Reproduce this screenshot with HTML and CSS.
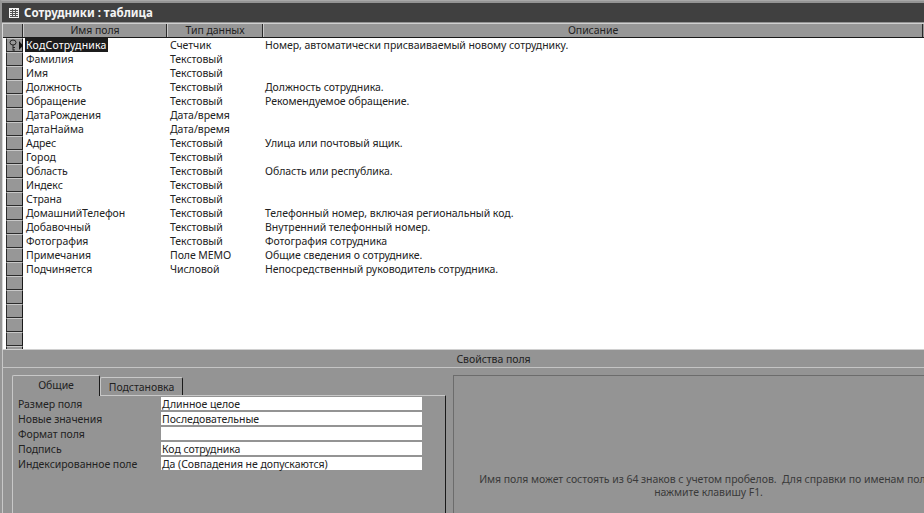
FILE: index.html
```html
<!DOCTYPE html>
<html lang="ru">
<head>
    <meta charset="UTF-8">
    <link rel="stylesheet" href="styles.css">
    <title>Сотрудники : таблица</title>
</head>
<body>
    <div class="window">
        <div class="titlebar">
            <svg class="title-icon" width="10" height="10" viewBox="0 0 10 10">
                <rect width="10" height="10" fill="#f4f4f4"/>
                <path d="M1 2.5H9M1 4.5H9M1 6.5H9M1 8.5H9M3.5 1V9M6.5 1V9" stroke="#555" fill="none"/>
            </svg>
            <span>Сотрудники : таблица</span>
        </div>

        <div class="design-grid">
            <div class="grid-head">
                <div class="sel-head"></div>
                <div class="col-name head-cell">Имя поля</div>
                <div class="col-type head-cell">Тип данных</div>
                <div class="col-desc head-cell">Описание</div>
            </div>
            <div class="grid-body">
                <div class="row"><div class="sel">
                    <svg width="16" height="13" viewBox="0 0 16 13">
                        <ellipse cx="6" cy="3.5" rx="3" ry="2.5" fill="none" stroke="#222"/>
                        <path d="M6 6V11.5M6 8.5H8M6 11H8" stroke="#222" fill="none"/>
                        <path d="M12 2L16 6.5L12 11Z" fill="#111"/>
                    </svg>
                </div><div class="col-name"><span class="picked">КодСотрудника</span></div><div class="col-type">Счетчик</div><div class="col-desc">Номер, автоматически присваиваемый новому сотруднику.</div></div>
                <div class="row"><div class="sel"></div><div class="col-name">Фамилия</div><div class="col-type">Текстовый</div><div class="col-desc"></div></div>
                <div class="row"><div class="sel"></div><div class="col-name">Имя</div><div class="col-type">Текстовый</div><div class="col-desc"></div></div>
                <div class="row"><div class="sel"></div><div class="col-name">Должность</div><div class="col-type">Текстовый</div><div class="col-desc">Должность сотрудника.</div></div>
                <div class="row"><div class="sel"></div><div class="col-name">Обращение</div><div class="col-type">Текстовый</div><div class="col-desc">Рекомендуемое обращение.</div></div>
                <div class="row"><div class="sel"></div><div class="col-name">ДатаРождения</div><div class="col-type">Дата/время</div><div class="col-desc"></div></div>
                <div class="row"><div class="sel"></div><div class="col-name">ДатаНайма</div><div class="col-type">Дата/время</div><div class="col-desc"></div></div>
                <div class="row"><div class="sel"></div><div class="col-name">Адрес</div><div class="col-type">Текстовый</div><div class="col-desc">Улица или почтовый ящик.</div></div>
                <div class="row"><div class="sel"></div><div class="col-name">Город</div><div class="col-type">Текстовый</div><div class="col-desc"></div></div>
                <div class="row"><div class="sel"></div><div class="col-name">Область</div><div class="col-type">Текстовый</div><div class="col-desc">Область или республика.</div></div>
                <div class="row"><div class="sel"></div><div class="col-name">Индекс</div><div class="col-type">Текстовый</div><div class="col-desc"></div></div>
                <div class="row"><div class="sel"></div><div class="col-name">Страна</div><div class="col-type">Текстовый</div><div class="col-desc"></div></div>
                <div class="row"><div class="sel"></div><div class="col-name">ДомашнийТелефон</div><div class="col-type">Текстовый</div><div class="col-desc">Телефонный номер, включая региональный код.</div></div>
                <div class="row"><div class="sel"></div><div class="col-name">Добавочный</div><div class="col-type">Текстовый</div><div class="col-desc">Внутренний телефонный номер.</div></div>
                <div class="row"><div class="sel"></div><div class="col-name">Фотография</div><div class="col-type">Текстовый</div><div class="col-desc">Фотография сотрудника</div></div>
                <div class="row"><div class="sel"></div><div class="col-name">Примечания</div><div class="col-type">Поле MEMO</div><div class="col-desc">Общие сведения о сотруднике.</div></div>
                <div class="row"><div class="sel"></div><div class="col-name">Подчиняется</div><div class="col-type">Числовой</div><div class="col-desc">Непосредственный руководитель сотрудника.</div></div>
                <div class="row"><div class="sel"></div></div>
                <div class="row"><div class="sel"></div></div>
                <div class="row"><div class="sel"></div></div>
                <div class="row"><div class="sel"></div></div>
                <div class="row"><div class="sel"></div></div>
                <div class="row"><div class="sel"></div></div>
            </div>
        </div>

        <div class="props-title">Свойства поля</div>

        <div class="props">
            <div class="props-left">
                <div class="tabs">
                    <div class="tab tab-active">Общие</div>
                    <div class="tab">Подстановка</div>
                </div>
                <div class="tab-page">
                    <div class="prop"><label>Размер поля</label><div class="value">Длинное целое</div></div>
                    <div class="prop"><label>Новые значения</label><div class="value">Последовательные</div></div>
                    <div class="prop"><label>Формат поля</label><div class="value"></div></div>
                    <div class="prop"><label>Подпись</label><div class="value">Код сотрудника</div></div>
                    <div class="prop"><label>Индексированное поле</label><div class="value">Да (Совпадения не допускаются)</div></div>
                </div>
            </div>
            <div class="help">
                Имя поля может состоять из 64 знаков с учетом пробелов.&nbsp; Для справки по именам полей<br>нажмите клавишу F1.
            </div>
        </div>
    </div>
</body>
</html>
```

FILE: styles.css
```css
html, body {
    margin: 0;
    padding: 0;
    height: 100%;
    overflow: hidden;
}

body {
    font-family: "Noto Sans", sans-serif;
    font-size: 10.5px;
    letter-spacing: -0.05px;
    color: #222;
    background-color: #949494;
}

.window {
    width: 984px;
    height: 513px;
    box-sizing: border-box;
    border-top: 1px solid #a8a8a8;
    border-left: 2px solid #969696;
    display: flex;
    flex-direction: column;
    overflow: hidden;
}

.titlebar {
    height: 19px;
    margin-top: 2px;
    background-color: #404040;
    color: #f4f4f4;
    font-size: 11.5px;
    font-weight: bold;
    letter-spacing: 0;
    display: flex;
    align-items: center;
    gap: 5px;
    padding-left: 7px;
    flex: none;
}

.design-grid {
    margin-top: 1px;
    height: 325px;
    flex: none;
    border-top: 1px solid #d0d0d0;
    border-left: 1px solid #d8d8d8;
    border-bottom: 1px solid #d0d0d0;
    padding-left: 3px;
    overflow: hidden;
    background-color: #fff;
}

.grid-head {
    display: flex;
    height: 13px;
    background-color: #979797;
    border-bottom: 1px solid #1a1a1a;
    margin-left: -3px;
    padding-left: 3px;
    text-align: center;
}

.sel-head {
    width: 17px;
    box-sizing: border-box;
    border-right: 1px solid #2a2a2a;
    flex: none;
}

.head-cell {
    line-height: 13px;
    border-right: 1px solid #2a2a2a;
    border-left: 1px solid #c8c8c8;
    box-sizing: border-box;
}

.col-name {
    width: 144px;
    flex: none;
    padding-left: 3px;
    box-sizing: border-box;
}

.col-type {
    width: 96px;
    flex: none;
    padding-left: 3px;
    box-sizing: border-box;
}

.col-desc {
    width: 660px;
    flex: none;
    padding-left: 2px;
    box-sizing: border-box;
}

.head-cell.col-name,
.head-cell.col-type,
.head-cell.col-desc {
    padding-left: 0;
}

.row {
    display: flex;
    height: 14px;
    line-height: 14px;
    white-space: nowrap;
}

.sel {
    width: 17px;
    height: 14px;
    box-sizing: border-box;
    background-color: #979797;
    border-bottom: 1px solid #2a2a2a;
    border-top: 1px solid #c8c8c8;
    border-left: 1px solid #2a2a2a;
    border-right: 1px solid #1a1a1a;
    flex: none;
}

.sel svg {
    display: block;
}

.picked {
    background-color: #1c1c1c;
    color: #fff;
    display: inline-block;
    width: 83px;
    margin-left: -1px;
    padding-left: 1px;
    letter-spacing: 0.2px;
    box-sizing: border-box;
}

.props-title {
    height: 17px;
    line-height: 19px;
    text-align: center;
    border-left: 1px solid #c8c8c8;
    border-bottom: 1px solid #c4c4c4;
    flex: none;
}

.props {
    flex: 1;
    display: flex;
    border-left: 1px solid #c8c8c8;
    padding: 7px 21px 0 9px;
}

.props-left {
    width: 434px;
    flex: none;
    display: flex;
    flex-direction: column;
}

.tabs {
    display: flex;
    height: 20px;
    align-items: flex-end;
    flex: none;
}

.tab {
    height: 18px;
    line-height: 19px;
    box-sizing: border-box;
    width: 83px;
    text-align: center;
    border-top: 1px solid #c8c8c8;
    border-left: 1px solid #c8c8c8;
    border-right: 1px solid #1a1a1a;
    border-radius: 2px 2px 0 0;
}

.tab-active {
    height: 21px;
    line-height: 18px;
    width: 88px;
    margin-bottom: -1px;
    background-color: #949494;
    position: relative;
}

.tab-page {
    flex: 1;
    border-top: 1px solid #c8c8c8;
    border-left: 1px solid #c8c8c8;
    border-right: 1px solid #1a1a1a;
    padding: 1px 23px 0 5px;
}

.prop {
    display: flex;
    height: 15px;
    line-height: 15px;
}

.prop label {
    width: 143px;
    flex: none;
}

.value {
    flex: 1;
    height: 13px;
    background-color: #fff;
    padding-left: 1px;
}

.help {
    margin-left: 7px;
    flex: 1;
    border-top: 1px solid #6c6c6c;
    border-left: 1px solid #6c6c6c;
    text-align: center;
    padding-top: 97px;
    line-height: 13px;
    color: #3a3a3a;
}
```
